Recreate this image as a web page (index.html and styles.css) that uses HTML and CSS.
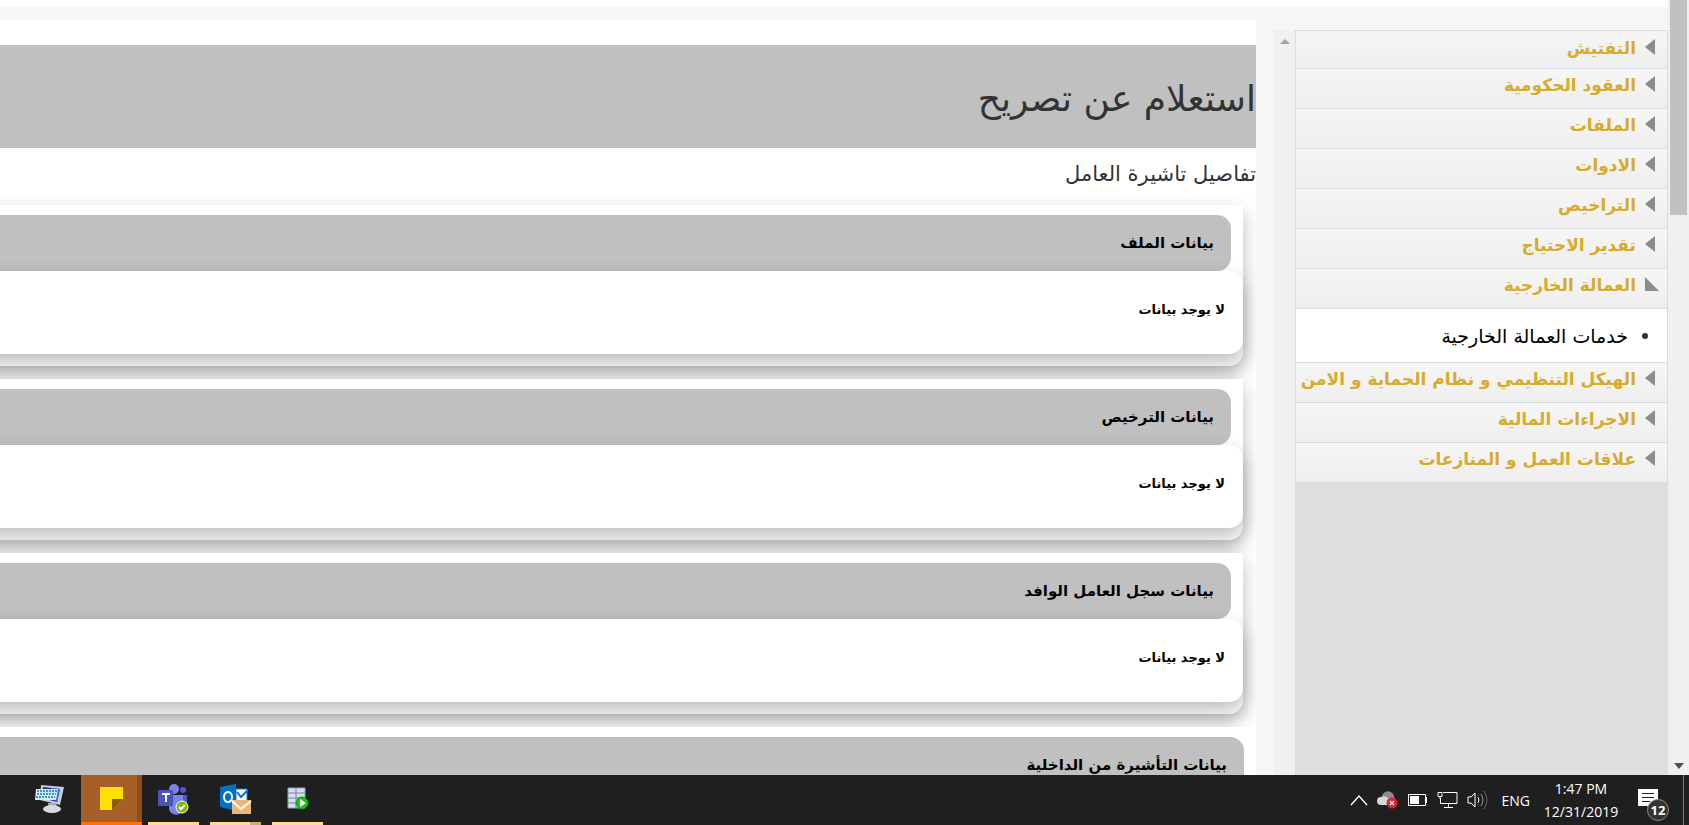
FILE: index.html
```html
<!DOCTYPE html>
<html lang="ar" dir="rtl">
<head>
<meta charset="utf-8">
<title>استعلام عن تصريح</title>
<link rel="stylesheet" href="styles.css">
</head>
<body>
<div class="page">
  <div class="page-scroll" aria-hidden="true">
    <div class="page-thumb"></div>
    <svg class="arrow" width="10" height="6" viewBox="0 0 10 6"><path d="M0 0h10L5 6z" fill="#505050"/></svg>
  </div>
  <div class="content">
    <div class="top-strip"></div>
    <div class="columns">
      <nav class="sidebar">
        <ul class="menu">
          <li class="menu-item"><a class="menu-link" href="#">التفتيش</a></li>
          <li class="menu-item"><a class="menu-link" href="#">العقود الحكومية</a></li>
          <li class="menu-item"><a class="menu-link" href="#">الملفات</a></li>
          <li class="menu-item"><a class="menu-link" href="#">الادوات</a></li>
          <li class="menu-item"><a class="menu-link" href="#">التراخيص</a></li>
          <li class="menu-item"><a class="menu-link" href="#">تقدير الاحتياج</a></li>
          <li class="menu-item open"><a class="menu-link" href="#">العمالة الخارجية</a>
            <ul class="submenu"><li class="submenu-item"><a class="submenu-link" href="#">خدمات العمالة الخارجية</a></li></ul>
          </li>
          <li class="menu-item"><a class="menu-link" href="#">الهيكل التنظيمي و نظام الحماية و الامن</a></li>
          <li class="menu-item"><a class="menu-link" href="#">الاجراءات المالية</a></li>
          <li class="menu-item"><a class="menu-link" href="#">علاقات العمل و المنازعات</a></li>
        </ul>
      </nav>
      <div class="side-scroll" aria-hidden="true">
        <svg width="10" height="5" viewBox="0 0 10 5"><path d="M5 0l5 5H0z" fill="#a3a3a3"/></svg>
      </div>
      <main class="main">
        <h1 class="title">استعلام عن تصريح</h1>
        <h2 class="subtitle">تفاصيل تاشيرة العامل</h2>
        <section class="card"><h3 class="card-head">بيانات الملف</h3><p class="card-body">لا يوجد بيانات</p></section>
        <section class="card"><h3 class="card-head">بيانات الترخيص</h3><p class="card-body">لا يوجد بيانات</p></section>
        <section class="card"><h3 class="card-head">بيانات سجل العامل الوافد</h3><p class="card-body">لا يوجد بيانات</p></section>
        <section class="card wide"><h3 class="card-head">بيانات التأشيرة من الداخلية</h3></section>
      </main>
    </div>
  </div>
</div>
<footer class="taskbar" dir="ltr">
  <div class="apps">
    <button class="app" aria-label="On-Screen Keyboard">
      <svg width="30" height="30" viewBox="0 0 30 30"><path d="M6 1l23 2-4 18L5 16z" fill="#c9cdd2"/><path d="M8 3l17 2-3 13L7 14z" fill="#1426b8"/><path d="M17 4l8 1-3 13-8-5z" fill="#3d6be0"/><path d="M13 19h8l1 5h-8z" fill="#a9adb1"/><ellipse cx="17" cy="25" rx="9" ry="4" fill="#d8dadd"/><path d="M1 5h22l-2 11H0z" fill="#d7ecf7"/><path d="M2 7h20M2 10h19M1 13h19" stroke="#3a94cf" stroke-width="2" stroke-dasharray="2 1"/></svg>
    </button>
    <button class="app active" aria-label="Sticky Notes">
      <svg width="24" height="24" viewBox="0 0 24 24"><path d="M0 0h23v12L12 23H0z" fill="#ffe000"/><path d="M12 12h11L12 23z" fill="#8f5a00"/></svg>
    </button>
    <button class="app running" aria-label="Teams">
      <svg width="32" height="32" viewBox="0 0 32 32"><circle cx="16" cy="6" r="5" fill="#7b83eb"/><circle cx="25" cy="7" r="3" fill="#5059c9"/><path d="M20 12h9v10a5 5 0 0 1-9 2z" fill="#5059c9"/><path d="M11 12h14v11a7 7 0 0 1-14 3z" fill="#7b83eb"/><rect y="7" width="15" height="16" rx="1" fill="#4b53bc"/><path d="M4 11h8M8 11v8" stroke="#fff" stroke-width="2"/><circle cx="24" cy="24" r="6" fill="#7fba00" stroke="#fff"/><path d="M21 24l2 2 4-4" fill="none" stroke="#fff" stroke-width="2"/></svg>
    </button>
    <button class="app running stacked" aria-label="Outlook">
      <svg width="32" height="32" viewBox="0 0 32 32"><path d="M16 6h11v14H16z" fill="#fff" stroke="#1976c8" stroke-width="1"/><path d="M17 9l4 5 7-7" fill="none" stroke="#0f6fc6" stroke-width="2"/><path d="M0 4l16-3v27L0 24z" fill="#0072c6"/><ellipse cx="8" cy="14" rx="4" ry="5" fill="none" stroke="#fff" stroke-width="2"/><path d="M12 17h19v14H12z" fill="#eab676"/><path d="M12 18l9 8 10-8" fill="none" stroke="#fff" stroke-width="2"/></svg>
    </button>
    <button class="app running" aria-label="Server Manager">
      <svg width="24" height="24" viewBox="0 0 24 24"><path d="M2 1h17v20H2z" fill="#d3dfe9" stroke="#8ca3b8"/><path d="M2 6h17M2 11h17M2 16h17M10 1v20" stroke="#718ba5"/><circle cx="16" cy="16" r="6" fill="#16c60c" stroke="#0c9b08"/><path d="M14 12l6 4-6 4z" fill="#fff"/></svg>
    </button>
  </div>
  <div class="tray">
    <svg width="18" height="12" viewBox="0 0 18 12"><path d="M1 11l8-9 8 9" fill="none" stroke="#fff" stroke-width="1.3"/></svg>
    <svg width="22" height="20" viewBox="0 0 22 20"><path d="M5 9a6 6 0 0 1 12-3l2 8H6z" fill="#8d8d8d"/><path d="M4 15a4 4 0 0 1 0-8 6 6 0 0 1 7 1l5 7z" fill="#d6d6d6"/><circle cx="15" cy="13" r="5.5" fill="#d9232e"/><path d="M13 11l4 4M17 11l-4 4" stroke="#fff" stroke-width="1.3"/></svg>
    <svg width="20" height="12" viewBox="0 0 20 12"><path d="M.5.5h17v11H.5z" fill="none" stroke="#fff"/><path d="M2 2h9v8H2z" fill="#fff"/><path d="M18 3h1v6h-1z" fill="#fff"/></svg>
    <svg width="21" height="18" viewBox="0 0 21 18"><path d="M6 1.5h14v11H3.5V7M11.5 13v3M7 16.5h9M1 1.5h4v4H1zM3 6v2" fill="none" stroke="#fff"/></svg>
    <svg width="22" height="20" viewBox="0 0 22 20"><path d="M1 7h3l4-4v14l-4-4H1z" fill="none" stroke="#fff"/><path d="M11 7q2 3 0 6" fill="none" stroke="#fff"/><path d="M14 4q4 6 0 12" fill="none" stroke="#999"/><path d="M17 1q6 9 0 18" fill="none" stroke="#666"/></svg>
    <span class="lang">ENG</span>
    <div class="clock"><span>1:47 PM</span><span>12/31/2019</span></div>
    <button class="notice" aria-label="Notifications">
      <svg width="21" height="22" viewBox="0 0 21 22"><path d="M0 0h20v17h-6v4l-5-4H0z" fill="#fff"/><path d="M4 4.5h12M4 8.5h12M4 12.5h8" stroke="#1f1f1f"/></svg>
      <span class="badge">12</span>
    </button>
    <div class="desktop-edge"></div>
  </div>
</footer>
</body>
</html>
```
FILE: styles.css
```css
* { box-sizing: border-box; }
body {
  margin: 0;
  height: 100vh;
  display: flex;
  flex-direction: column;
  overflow: hidden;
  font-family: "DejaVu Sans", sans-serif;
  color: #333;
  background: #fff;
}
h1, h2, h3, p, ul { margin: 0; padding: 0; }
ul { list-style: none; }
a { text-decoration: none; }
button { border: 0; padding: 0; background: none; }
svg { display: block; flex: none; }

.page { flex: 1; min-height: 0; display: flex; }
.page-scroll {
  width: 21px;
  flex: none;
  background: #f0f0f0;
  display: flex;
  flex-direction: column;
  justify-content: space-between;
  align-items: center;
  padding-bottom: 6px;
}
.page-thumb { width: 17px; height: 215px; background: #c1c1c1; }
.content {
  flex: 1;
  min-width: 0;
  display: flex;
  flex-direction: column;
  background: linear-gradient(45deg, #f2f2f2 25%, #f9f9f9 25% 50%, #f2f2f2 50% 75%, #f9f9f9 75%) 0 0 / 4px 4px;
}
.top-strip { height: 7px; flex: none; background: #fff; }
.columns { flex: 1; min-height: 0; display: flex; }

.sidebar {
  width: 373px;
  flex: none;
  margin-top: 23px;
  background: #dedede;
}
.menu { border: 1px solid #d6dde2; border-width: 0 1px; }
.menu-link {
  display: flex;
  align-items: center;
  height: 40px;
  padding: 0 12px 7px;
  gap: 9px;
  border-top: 1px solid #d6dde2;
  background: linear-gradient(#f6f6f6, #eeeeee);
  color: #d7ab2c;
  font-size: 17px;
  font-weight: bold;
  white-space: nowrap;
}
.menu-item:first-child .menu-link { height: 38px; padding-bottom: 3px; }
.menu-link::before {
  content: "";
  flex: none;
  width: 10px;
  height: 16px;
  margin-bottom: 2px;
  background: #878c8f;
  clip-path: polygon(100% 0, 100% 100%, 0 50%);
}
.open .menu-link { padding-right: 8px; }
.open .menu-link::before { width: 14px; height: 14px; clip-path: polygon(0 0, 100% 100%, 0 100%); }
.submenu { background: #fff; border-top: 1px solid #d6dde2; }
.submenu-item { display: flex; align-items: center; height: 53px; padding: 0 19px; gap: 14px; }
.submenu-item::before { content: ""; width: 6px; height: 6px; border-radius: 50%; background: #333; }
.submenu-link { color: #000; font-size: 19px; white-space: nowrap; }

.side-scroll {
  width: 21px;
  flex: none;
  margin: 23px 0 0 18px;
  padding-top: 9px;
  background: #f0f0f0;
  display: flex;
  justify-content: center;
}

.main {
  flex: 1;
  min-width: 0;
  margin-top: 13px;
  padding-top: 25px;
  background: #fff;
  overflow: hidden;
}
.title {
  height: 103px;
  background: #c0c0c0;
  font-size: 36px;
  font-weight: normal;
  line-height: 107px;
}
.subtitle { height: 57px; font-size: 21px; font-weight: normal; line-height: 52px; }
.card {
  margin: 0 13px 13px -24px;
  padding: 10px 0 12px;
  background: #fff;
  border-radius: 0 0 14px 0;
  box-shadow: 0 8px 19px rgba(0, 0, 0, .27);
}
.card-head {
  height: 56px;
  margin-right: 12px;
  padding-right: 17px;
  border-radius: 0 14px 14px 0;
  background: #c0c0c0;
  color: #000;
  font-size: 15px;
  line-height: 56px;
}
.card-body {
  height: 83px;
  padding-right: 18px;
  border-radius: 0 14px 14px 0;
  background: #fff;
  box-shadow: 0 8px 19px rgba(0, 0, 0, .27);
  color: #000;
  font-size: 13px;
  font-weight: bold;
  line-height: 78px;
}
.wide { margin: 0; box-shadow: none; position: relative; }

.taskbar {
  height: 50px;
  flex: none;
  position: relative;
  display: flex;
  justify-content: space-between;
  background: #1f1f1f;
  color: #fff;
  font-family: "Open Sans", sans-serif;
  font-size: 14px;
}
.apps { display: flex; padding-left: 19px; gap: 1px; }
.app {
  width: 61px;
  display: flex;
  align-items: center;
  justify-content: center;
  border-bottom: 3px solid transparent;
}
.active { background: linear-gradient(90deg, #a65f27 56px, #8e4c1c 56px); border-bottom-color: #ff7200; }
.running { border-bottom: 0; padding-bottom: 3px; background: linear-gradient(#fedb8c, #fedb8c) center bottom / 51px 3px no-repeat; }
.stacked { background: linear-gradient(90deg, #fedb8c 40px, #cfae6c 40px) center bottom / 51px 3px no-repeat; }
.tray { display: flex; align-items: center; gap: 9px; }
.lang { padding: 0 4px; }
.clock { width: 76px; display: flex; flex-direction: column; align-items: center; line-height: 23px; }
.notice { position: relative; color: #fff; margin-left: 10px; }
.badge {
  position: absolute;
  left: 9px;
  top: 10px;
  width: 22px;
  height: 22px;
  border: 1px solid #8a8a8a;
  border-radius: 50%;
  background: #333;
  font: bold 13px/20px "Open Sans", sans-serif;
  text-align: center;
}
.desktop-edge { width: 6px; height: 50px; margin-left: 15px; border-left: 1px solid #777; }
```
